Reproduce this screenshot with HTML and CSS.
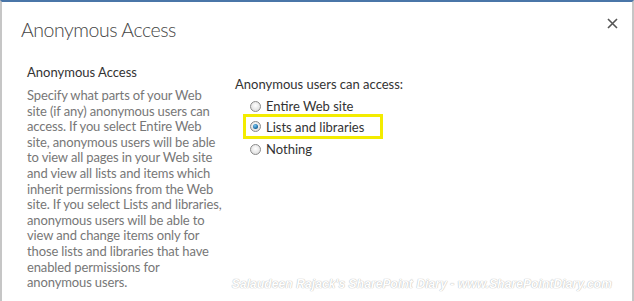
FILE: index.html
```html
<!DOCTYPE html>
<html>
<head>
<meta charset="utf-8">
<link rel="stylesheet" href="styles.css">
</head>
<body>
<div class="dialog">
  <div class="titlebar">
    <h1 class="title">Anonymous Access</h1>
    <span class="close">
      <svg width="11" height="11" viewBox="0 0 11 11"><path d="M1 1 L10 10 M10 1 L1 10" stroke="#555" stroke-width="1.6" fill="none"/></svg>
    </span>
  </div>
  <div class="content">
    <div class="left">
      <h2 class="sec">Anonymous Access</h2>
      <p class="desc">Specify what parts of your Web<br>site (if any) anonymous users can<br>access. If you select Entire Web<br>site, anonymous users will be able<br>to view all pages in your Web site<br>and view all lists and items which<br>inherit permissions from the Web<br>site. If you select Lists and libraries,<br>anonymous users will be able to<br>view and change items only for<br>those lists and libraries that have<br>enabled permissions for<br>anonymous users.</p>
    </div>
    <div class="right">
      <div class="label">Anonymous users can access:</div>
      <div class="options">
        <label class="opt"><span class="radio"></span>Entire Web site</label>
        <label class="opt hl"><span class="radio on"></span>Lists and libraries</label>
        <label class="opt"><span class="radio"></span>Nothing</label>
      </div>
    </div>
  </div>
  <div class="watermark">Salaudeen Rajack's SharePoint Diary - www.SharePointDiary.com</div>
</div>
</body>
</html>
```
FILE: styles.css
```css
html, body { margin: 0; padding: 0; background: #fff; }
body { width: 634px; height: 301px; overflow: hidden; font-family: "Lato", "Open Sans", sans-serif; }
.dialog {
  position: relative;
  box-sizing: border-box;
  width: 634px; height: 301px;
  border-top: 2px solid #4a76a8;
  border-left: 2px solid #c6c6c6;
  border-right: 2px solid #c6c6c6;
  background: #fff;
}
.titlebar { display: flex; justify-content: space-between; align-items: flex-start; padding: 14px 14px 0 19px; }
.title { margin: 0; font-weight: 300; font-size: 19.5px; letter-spacing: -0.45px; color: #444; line-height: 28px; }
.close { display: block; margin-top: -3px; }
.content { display: flex; padding: 20px 0 0 25px; }
.left { width: 184px; flex: none; }
.sec { margin: 0; font-weight: 400; font-size: 13px; color: #333; line-height: 16px; }
.desc { margin: 8px 0 0 0; font-size: 13px; letter-spacing: -0.13px; color: #777; line-height: 15.6px; white-space: nowrap; }
.right { margin-left: 24px; padding-top: 12px; }
.label { font-size: 13px; color: #333; line-height: 16px; }
.options { display: flex; flex-direction: column; margin-top: 4px; margin-left: 8px; }
.opt { display: flex; align-items: center; font-size: 13px; color: #333; height: 20px; box-sizing: border-box; padding-left: 7px; }
.opt.hl { border: 3px solid #f3ec00; width: 140px; height: 25px; padding-left: 4px; margin-top: -2px; }
.radio { width: 11px; height: 11px; border-radius: 50%; border: 1px solid #8a8a8a; background: radial-gradient(circle at 50% 40%, #fff 0, #e6e6e6 60%, #cfcfcf 100%); margin-right: 5px; box-sizing: border-box; position: relative; }
.radio.on::after { content: ""; position: absolute; left: 2px; top: 2px; width: 5px; height: 5px; border-radius: 50%; background: radial-gradient(circle at 40% 35%, #7ec8f0 0, #1d6fa8 60%, #0b3f66 100%); }
.watermark { position: absolute; right: 20px; bottom: 10px; font-family: "Liberation Sans", sans-serif; font-weight: bold; font-style: italic; font-size: 12px; color: #fff; text-shadow: 0 0 1px #bbb, 0 0 1px #bbb; letter-spacing: 0.1px; }
```
